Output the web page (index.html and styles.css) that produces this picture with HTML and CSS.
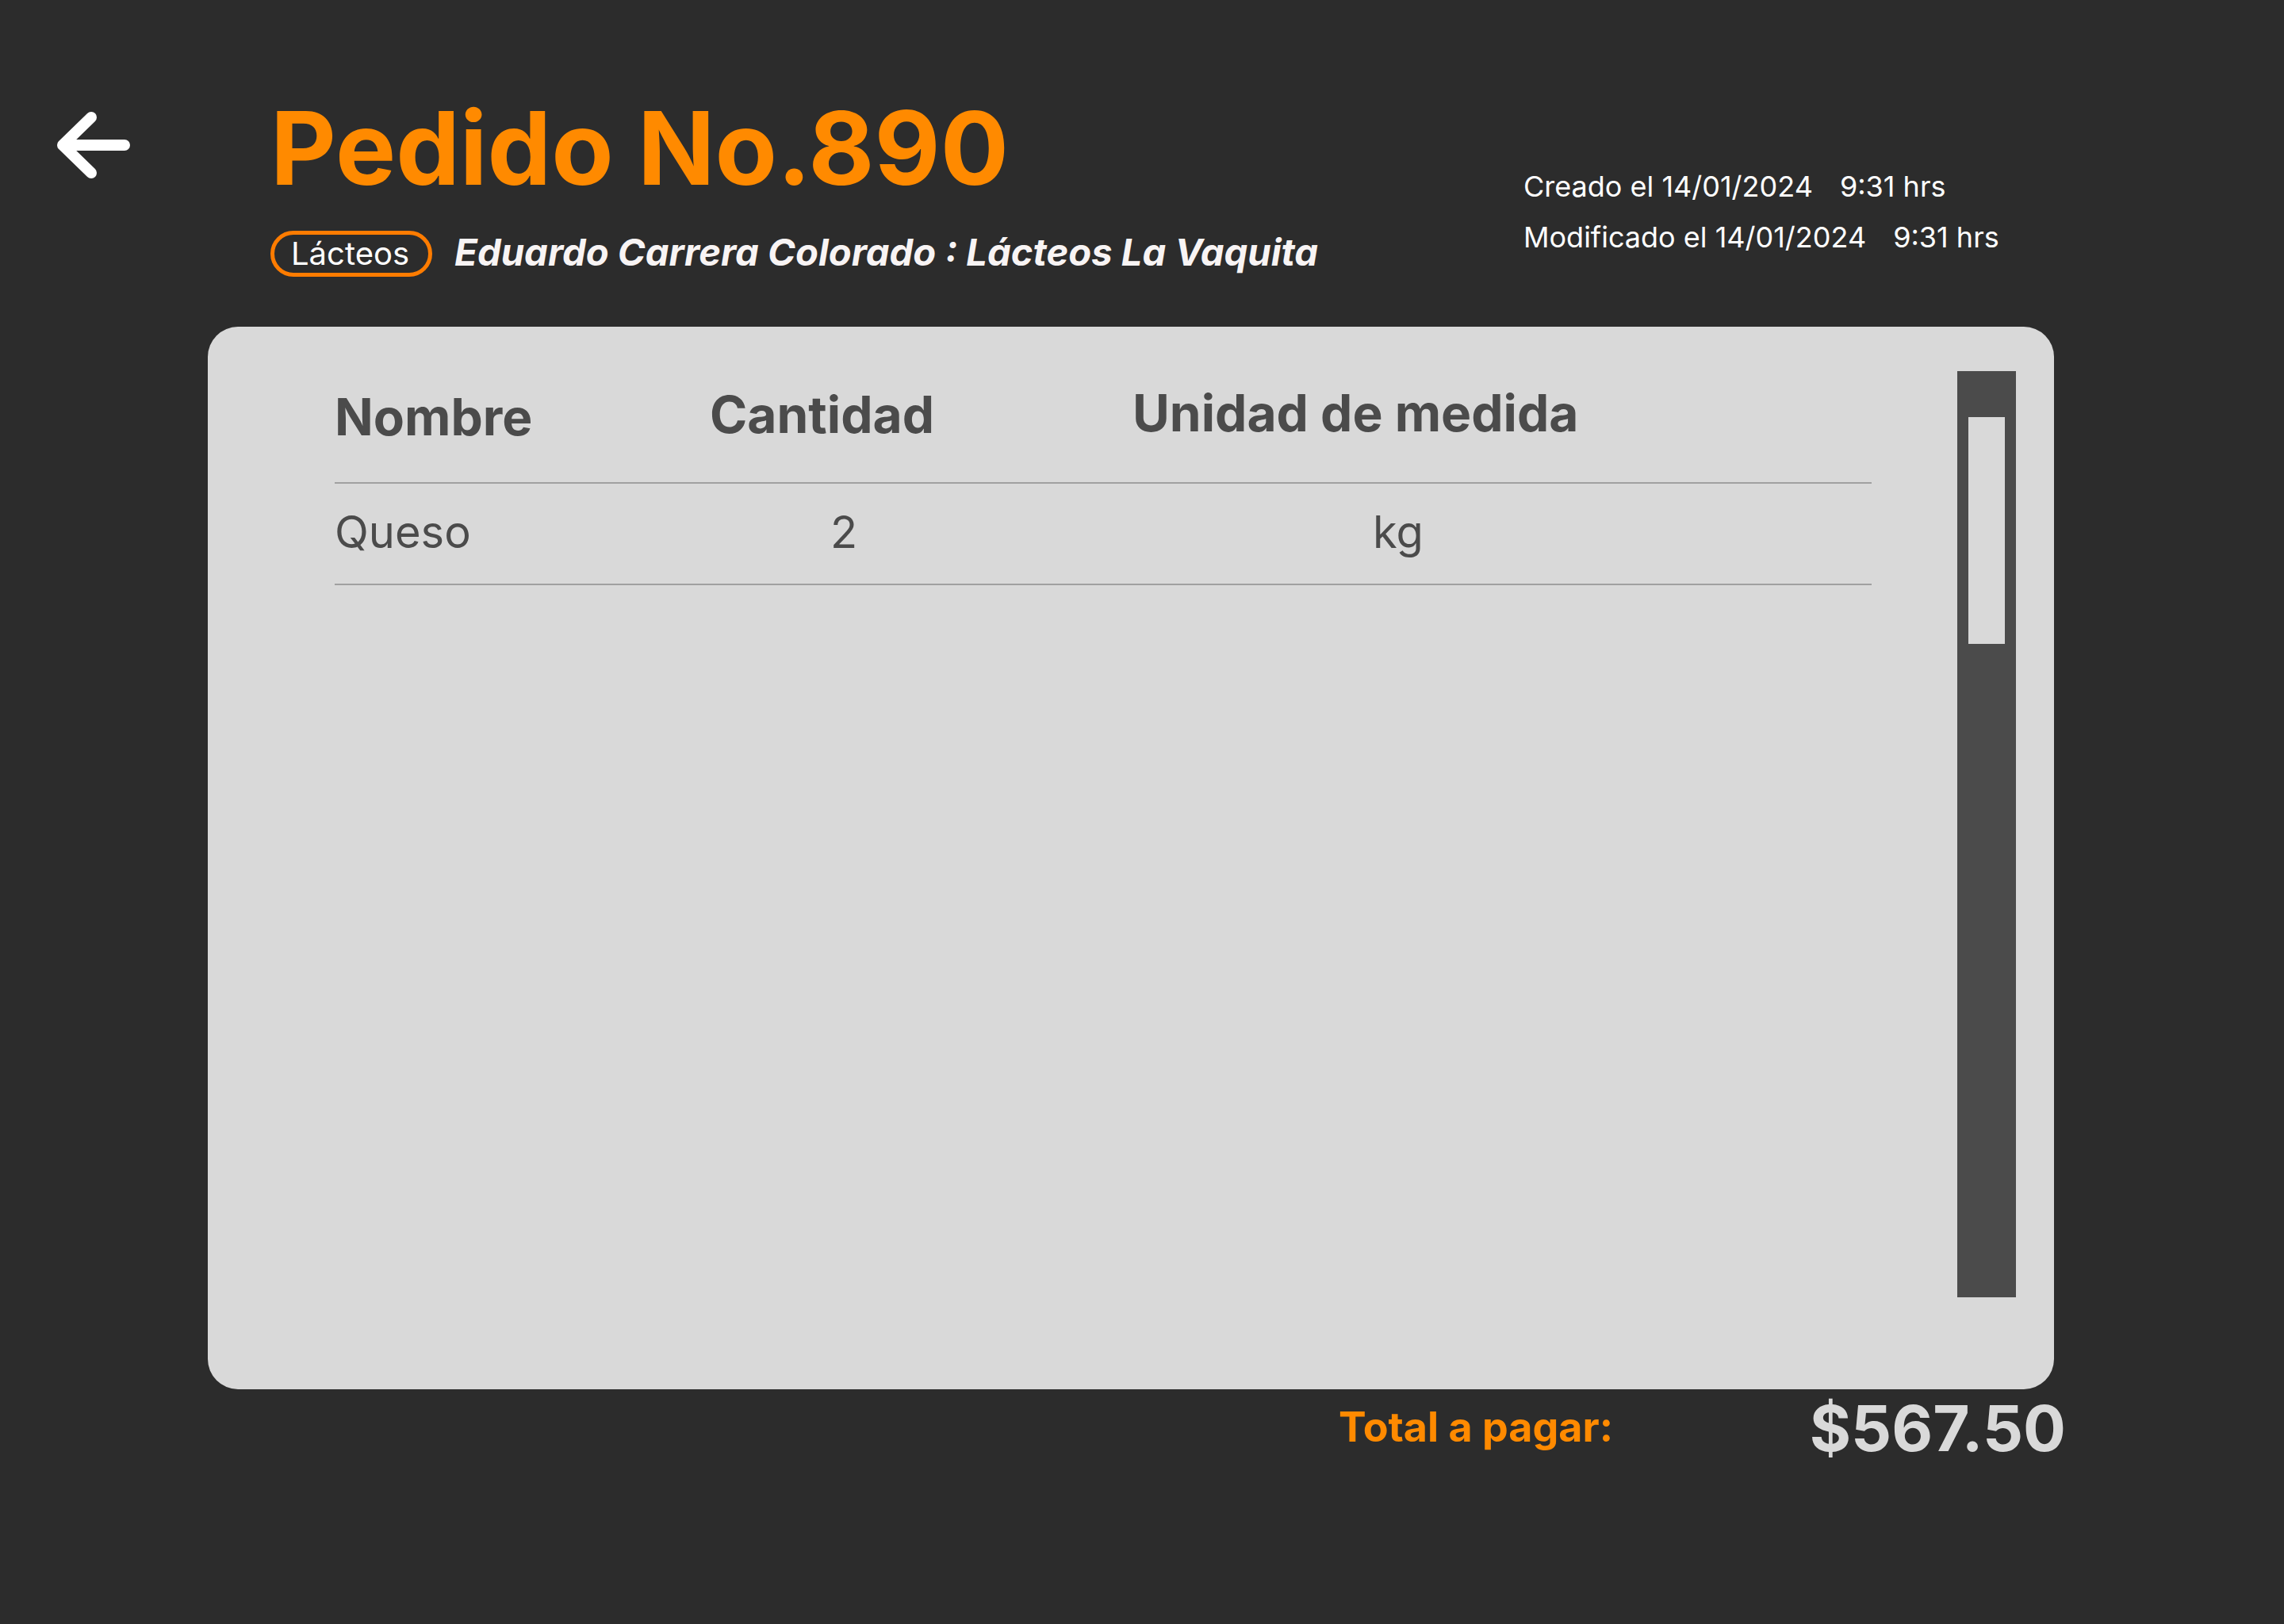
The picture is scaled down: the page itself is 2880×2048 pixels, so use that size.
FILE: index.html
```html
<!DOCTYPE html>
<html lang="es">
<head>
<meta charset="utf-8">
<title>Pedido No.890</title>
<link rel="stylesheet" href="styles.css">
</head>
<body>
<div class="page">
  <header class="top">
    <a class="back" href="#" aria-label="Regresar">
      <svg viewBox="0 0 96 86" width="96" height="86" aria-hidden="true">
        <path d="M45 8 L9 43 L45 78 M9 43 L87 43" fill="none" stroke="#ffffff" stroke-width="14" stroke-linecap="round" stroke-linejoin="round"/>
      </svg>
    </a>
    <div class="titles">
      <h1 class="title">Pedido No.890</h1>
      <div class="sub">
        <span class="tag">Lácteos</span>
        <span class="client">Eduardo Carrera Colorado : Lácteos La Vaquita</span>
      </div>
    </div>
    <div class="dates">
      <p class="date">Creado el 14/01/2024<span class="time">9:31 hrs</span></p>
      <p class="date">Modificado el 14/01/2024<span class="time">9:31 hrs</span></p>
    </div>
  </header>

  <section class="card">
    <div class="table">
      <div class="row head">
        <div class="cell h1c">Nombre</div>
        <div class="cell h2c">Cantidad</div>
        <div class="cell h3c">Unidad de medida</div>
      </div>
      <div class="row body">
        <div class="cell">Queso</div>
        <div class="cell qty">2</div>
        <div class="cell unit">kg</div>
      </div>
    </div>
    <div class="scroll">
      <div class="thumb"></div>
    </div>
  </section>

  <footer class="total">
    <span class="total-label">Total a pagar:</span>
    <span class="total-amount">$567.50</span>
  </footer>
</div>
</body>
</html>
```

FILE: styles.css
```css
* { box-sizing: border-box; }

html, body {
  margin: 0;
  padding: 0;
  background: #2c2c2c;
}

body {
  font-family: Inter, "Noto Sans", "Liberation Sans", sans-serif;
  width: 2880px;
  height: 2048px;
  overflow: hidden;
}

.page {
  display: flex;
  flex-direction: column;
}

/* ---------- header ---------- */
.top {
  display: flex;
  align-items: flex-start;
  padding-top: 123px;
  padding-left: 70px;
}

.back {
  flex: none;
  display: block;
  width: 96px;
  height: 86px;
  margin-top: 17px;
}
.back svg { display: block; }

.titles {
  flex: 0 0 1755px;
  padding-left: 175px;
}

.title {
  margin: 0;
  font-size: 128px;
  line-height: 128px;
  font-weight: 700;
  color: #ff8a00;
}

.sub {
  display: flex;
  align-items: center;
  gap: 28px;
  margin-top: 40px;
  height: 58px;
}

.tag {
  display: inline-flex;
  align-items: center;
  height: 58px;
  padding: 0 24px 0 21px;
  border: 5px solid #ff7c00;
  border-radius: 29px;
  color: #ffffff;
  font-size: 40px;
  font-weight: 400;
  line-height: 1;
}

.client {
  color: #f8f4f4;
  font-size: 47.2px;
  font-weight: 700;
  font-style: italic;
  line-height: 58px;
  margin-top: -4px;
}

.dates {
  flex: none;
  margin-top: 80px;
  color: #ffffff;
}

.date {
  margin: 0;
  font-size: 36px;
  line-height: 64px;
  white-space: nowrap;
}

.time { margin-left: 34px; }

/* ---------- card ---------- */
.card {
  display: flex;
  width: 2328px;
  height: 1340px;
  margin-top: 63px;
  margin-left: 262px;
  padding: 56px 48px 116px 160px;
  background: #d9d9d9;
  border-radius: 38px;
}

.table {
  flex: 1;
  margin-right: 108px;
  color: #4b4b4b;
}

.row {
  display: grid;
  grid-template-columns: 473px 533px 1fr;
  border-bottom: 2px solid #a0a0a0;
}

.row.head {
  height: 142px;
  padding-top: 23px;
  font-size: 64px;
  line-height: 64px;
  font-weight: 700;
}
.h1c { padding-top: 3px; }
.h3c { margin-top: -2px; }

.row.body {
  height: 128px;
  padding-top: 33px;
  font-size: 56px;
  line-height: 56px;
  font-weight: 400;
}

.qty { padding-left: 152px; }
.unit { padding-left: 303px; }

.scroll {
  flex: none;
  width: 74px;
  padding: 58px 14px 0;
  background: #4b4b4b;
}

.thumb {
  height: 286px;
  background: #d9d9d9;
}

/* ---------- total ---------- */
.total {
  display: flex;
  align-items: flex-start;
  justify-content: space-between;
  width: 917px;
  margin-left: 1688px;
  margin-top: 9px;
}

.total-label {
  margin-top: 12px;
  color: #ff8a00;
  font-size: 52px;
  line-height: 54px;
  font-weight: 700;
}

.total-amount {
  color: #d9d9d9;
  font-size: 80px;
  line-height: 80px;
  font-weight: 700;
}
```
